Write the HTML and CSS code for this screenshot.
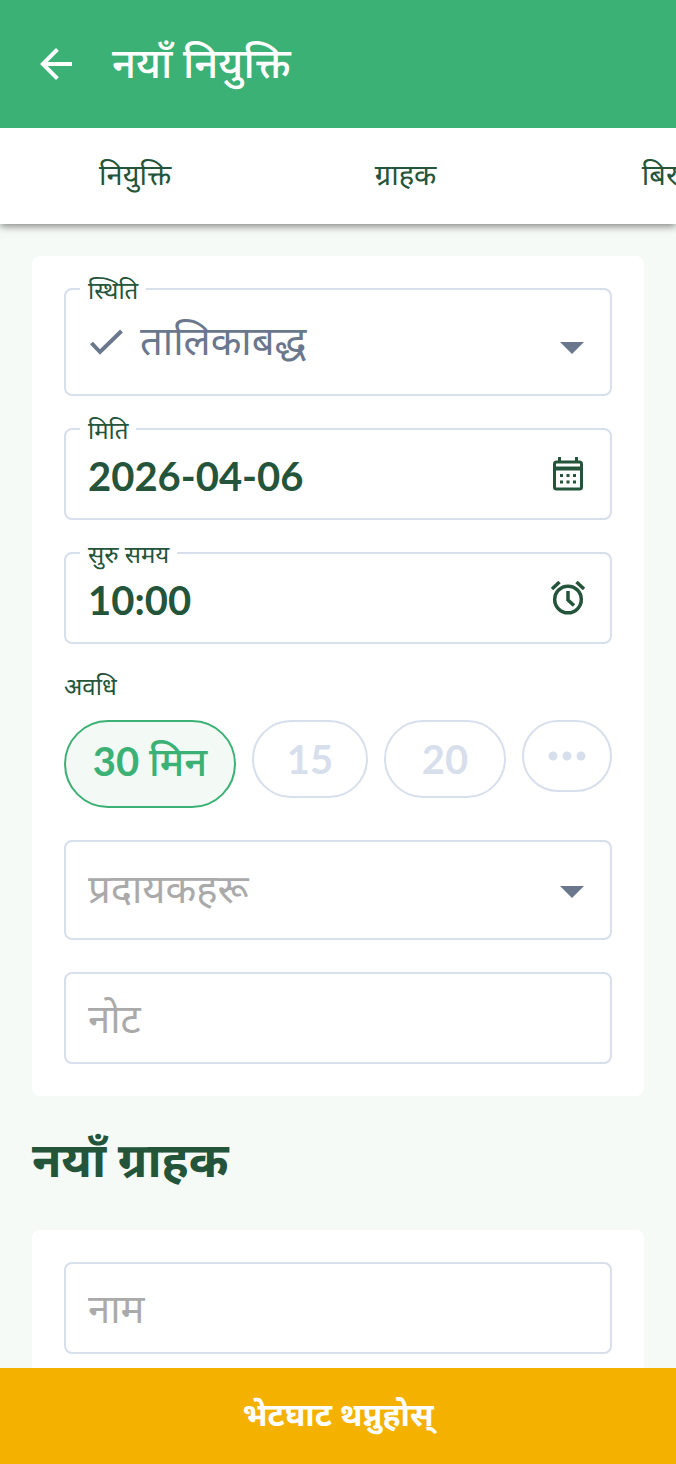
FILE: index.html
```html
<!DOCTYPE html>
<html lang="ne">
<head>
<meta charset="utf-8">
<meta name="viewport" content="width=device-width, initial-scale=1">
<title>नयाँ नियुक्ति</title>
<link rel="stylesheet" href="styles.css">
</head>
<body>
<header class="app-bar">
  <button class="back" type="button" aria-label="पछाडि">
    <svg viewBox="0 0 24 24"><path d="M20 11H7.83l5.59-5.59L12 4l-8 8 8 8 1.41-1.41L7.83 13H20v-2z"/></svg>
  </button>
  <h1 class="title">नयाँ नियुक्ति</h1>
</header>
<nav class="tabs">
  <a class="tab" href="#appointment">नियुक्ति</a>
  <a class="tab" href="#client">ग्राहक</a>
  <a class="tab" href="#patient">बिरामी</a>
</nav>
<main class="content">
  <section class="card" id="appointment">
    <div class="field field-status">
      <label class="field-label" for="status">स्थिति</label>
      <svg class="check" viewBox="0 0 44 44"><path d="M7.500 23l8.500 9L37.500 11" fill="none" stroke="currentColor" stroke-width="4"/></svg>
      <select class="control control-status" id="status"><option>तालिकाबद्ध</option></select>
      <svg class="caret" viewBox="0 0 24 12"><path d="M0 0h24L12 12z"/></svg>
    </div>
    <div class="field">
      <label class="field-label" for="date">मिति</label>
      <input class="control control-value" id="date" type="text" value="2026-04-06">
      <svg class="icon" viewBox="0 0 40 40"><g fill="none" stroke="currentColor" stroke-width="3"><path d="M11.500 3v5M28.500 3v5"/><rect x="6.500" y="8" width="27" height="27" rx="2"/><path d="M6.500 14.500h27" stroke-width="4"/></g><path d="M12 20h3v3h-3zM18.500 20h3v3h-3zM25 20h3v3h-3zM12 26.500h3v3h-3zM18.500 26.500h3v3h-3zM25 26.500h3v3h-3z"/></svg>
    </div>
    <div class="field">
      <label class="field-label" for="time">सुरु समय</label>
      <input class="control control-value" id="time" type="text" value="10:00">
      <svg class="icon" viewBox="0 0 40 40"><g fill="none" stroke="currentColor" stroke-width="3.500"><circle cx="20" cy="21.500" r="13.300"/><path d="M20 13v9l6 5.500M4 11l7.500-7M36 11l-7.500-7"/></g></svg>
    </div>
    <div class="duration">
      <span class="group-label" id="duration-label">अवधि</span>
      <div class="chips" role="group" aria-labelledby="duration-label">
        <button class="chip chip-selected" type="button">30 <span class="unit">मिन</span></button>
        <button class="chip chip-number" type="button">15</button>
        <button class="chip chip-number" type="button">20</button>
        <button class="chip chip-more" type="button" aria-label="थप">
          <svg viewBox="0 0 38 10"><circle cx="5" cy="5" r="4.500"/><circle cx="19" cy="5" r="4.500"/><circle cx="33" cy="5" r="4.500"/></svg>
        </button>
      </div>
    </div>
    <div class="field field-provider">
      <select class="control control-empty" aria-label="प्रदायकहरू"><option>प्रदायकहरू</option></select>
      <svg class="caret" viewBox="0 0 24 12"><path d="M0 0h24L12 12z"/></svg>
    </div>
    <div class="field">
      <input class="control" type="text" placeholder="नोट" aria-label="नोट">
    </div>
  </section>
  <h2 class="section-title">नयाँ ग्राहक</h2>
  <section class="card" id="client">
    <div class="field">
      <input class="control" type="text" placeholder="नाम" aria-label="नाम">
    </div>
  </section>
</main>
<button class="submit" type="submit">भेटघाट थप्नुहोस्</button>
</body>
</html>
```
FILE: styles.css
```css
:root {
  --green: #3cb175;
  --dark: #24543a;
  --slate: #6b778d;
  --line: #d8dfec;
  --muted: #aaaaaa;
}

* { box-sizing: border-box; }

body {
  margin: 0;
  height: 100vh;
  display: flex;
  flex-direction: column;
  overflow: hidden;
  background: #f5faf6;
  color: var(--dark);
  font-family: Lato, "Noto Sans Devanagari", "Noto Sans", sans-serif;
}

button, input, select { font-family: inherit; color: inherit; }
svg { display: block; flex: none; fill: currentColor; }

.app-bar {
  flex: none;
  position: relative;
  z-index: 2;
  min-height: 128px;
  padding: 0 32px;
  display: flex;
  align-items: center;
  gap: 32px;
  background: var(--green);
  color: #fff;
}
.back { padding: 0; border: 0; background: none; }
.back svg { width: 48px; height: 48px; }
.title { margin: 0; padding-bottom: 4px; font-size: 42px; line-height: 64px; font-weight: 500; }

.tabs {
  flex: none;
  position: relative;
  z-index: 1;
  min-height: 96px;
  padding-bottom: 4px;
  display: flex;
  align-items: center;
  overflow-x: auto;
  scrollbar-width: none;
  background: #fff;
  box-shadow: 0 2px 8px rgba(0, 0, 0, 0.5);
}
.tab {
  flex: 0 0 40%;
  text-align: center;
  font-size: 29px;
  line-height: 48px;
  color: inherit;
  text-decoration: none;
}

.content {
  flex: 1;
  min-height: 0;
  padding: 32px;
  overflow-y: auto;
  scrollbar-width: none;
}
.card {
  padding: 32px;
  display: flex;
  flex-direction: column;
  gap: 32px;
  border-radius: 8px;
  background: #fff;
}

.field {
  position: relative;
  min-height: 92px;
  padding: 0 22px;
  display: flex;
  align-items: center;
  border: 2px solid var(--line);
  border-radius: 8px;
}
.field-status { min-height: 108px; color: var(--slate); }
.field-provider { min-height: 100px; }
.field-label {
  position: absolute;
  top: -18px;
  left: 14px;
  padding: 0 8px;
  background: #fff;
  color: var(--dark);
  font-size: 24px;
  line-height: 36px;
}
.control {
  flex: 1;
  min-width: 0;
  height: 64px;
  padding: 0;
  border: 0;
  outline: 0;
  appearance: none;
  background: none;
  font-size: 40px;
}
.control::placeholder { color: var(--muted); }
.control-value { padding-top: 4px; font-weight: 700; }
.control-status, .control-empty { padding-bottom: 4px; }
.control-empty { color: var(--muted); }
.check { width: 44px; height: 44px; margin: 0 12px 0 -4px; }
.caret { width: 24px; height: 12px; margin: 4px 4px 0 0; color: var(--slate); }
.field-status .caret { margin-top: 12px; }
.icon { width: 40px; height: 40px; }

.duration { margin-top: -8px; }
.group-label { display: block; font-size: 24px; line-height: 36px; }
.chips {
  margin-top: 16px;
  display: grid;
  grid-template-columns: 86fr 58fr 61fr 45fr;
  align-items: start;
  gap: 16px;
}
.chip {
  min-height: 78px;
  padding: 0;
  border: 2px solid var(--line);
  border-radius: 44px;
  background: #fff;
  color: var(--line);
  font-size: 40px;
  font-weight: 700;
}
.chip-selected {
  min-height: 88px;
  border-color: var(--green);
  background: #f3f9f5;
  color: var(--green);
}
.unit { font-weight: 500; }
.chip-more { min-height: 72px; }
.chip-more svg { width: 38px; height: 10px; margin: 0 auto; }

.section-title { margin: 24px 0 32px; font-size: 48px; line-height: 78px; font-weight: 700; }

.submit {
  flex: none;
  min-height: 96px;
  border: 0;
  background: #f5b100;
  color: #fff;
  font-size: 32px;
  font-weight: 700;
}
```
